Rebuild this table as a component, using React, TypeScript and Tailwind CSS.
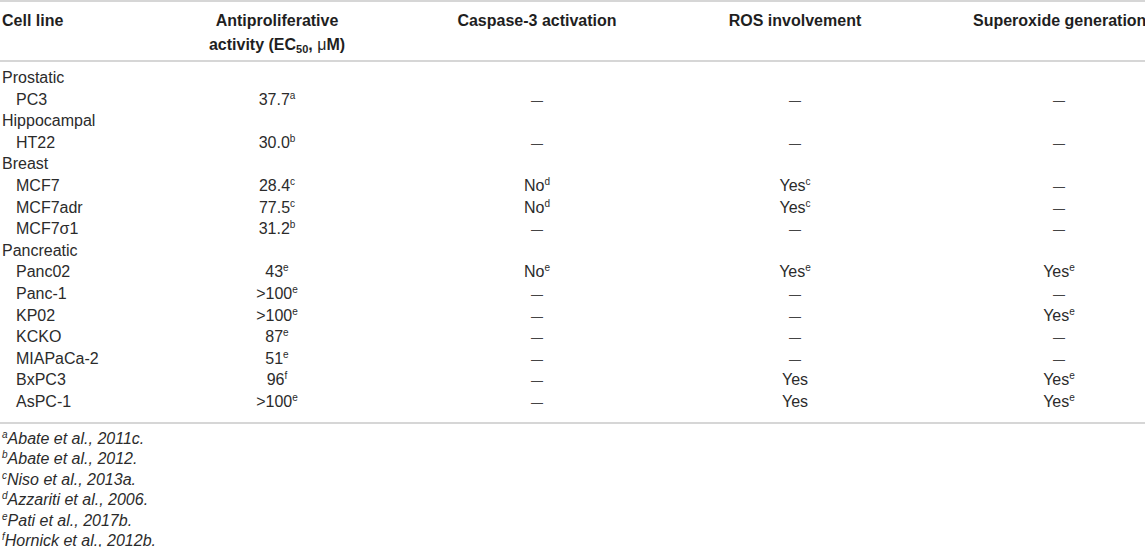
import React from 'react';

type Cell = { v: string; s?: string };

type Row = {
  name: string;
  group?: boolean;
  cells?: Cell[];
};

const dash: Cell = { v: '—' };

const rows: Row[] = [
  { name: 'Prostatic', group: true },
  { name: 'PC3', cells: [{ v: '37.7', s: 'a' }, dash, dash, dash] },
  { name: 'Hippocampal', group: true },
  { name: 'HT22', cells: [{ v: '30.0', s: 'b' }, dash, dash, dash] },
  { name: 'Breast', group: true },
  { name: 'MCF7', cells: [{ v: '28.4', s: 'c' }, { v: 'No', s: 'd' }, { v: 'Yes', s: 'c' }, dash] },
  { name: 'MCF7adr', cells: [{ v: '77.5', s: 'c' }, { v: 'No', s: 'd' }, { v: 'Yes', s: 'c' }, dash] },
  { name: 'MCF7σ1', cells: [{ v: '31.2', s: 'b' }, dash, dash, dash] },
  { name: 'Pancreatic', group: true },
  { name: 'Panc02', cells: [{ v: '43', s: 'e' }, { v: 'No', s: 'e' }, { v: 'Yes', s: 'e' }, { v: 'Yes', s: 'e' }] },
  { name: 'Panc-1', cells: [{ v: '>100', s: 'e' }, dash, dash, dash] },
  { name: 'KP02', cells: [{ v: '>100', s: 'e' }, dash, dash, { v: 'Yes', s: 'e' }] },
  { name: 'KCKO', cells: [{ v: '87', s: 'e' }, dash, dash, dash] },
  { name: 'MIAPaCa-2', cells: [{ v: '51', s: 'e' }, dash, dash, dash] },
  { name: 'BxPC3', cells: [{ v: '96', s: 'f' }, dash, { v: 'Yes' }, { v: 'Yes', s: 'e' }] },
  { name: 'AsPC-1', cells: [{ v: '>100', s: 'e' }, dash, { v: 'Yes' }, { v: 'Yes', s: 'e' }] },
];

const notes = [
  ['a', 'Abate et al., 2011c.'],
  ['b', 'Abate et al., 2012.'],
  ['c', 'Niso et al., 2013a.'],
  ['d', 'Azzariti et al., 2006.'],
  ['e', 'Pati et al., 2017b.'],
  ['f', 'Hornick et al., 2012b.'],
];

const grid = 'grid grid-cols-[97px_360px_160px_356px_172px]';

const App = () => {
  return (
    <div className="w-[1145px] h-[547px] overflow-hidden bg-white font-['Liberation_Sans',Arial,sans-serif] text-[16px] text-[#2b2b2b]">
      {/* header */}
      <div className={`${grid} border-t-2 border-b-2 border-[#d6d6d6] pt-[7px] pb-[3px] leading-[24px] font-bold text-[#1f1f1f]`}>
        <div className="pl-[2px] whitespace-nowrap">Cell line</div>
        <div className="text-center">
          Antiproliferative
          <br />
          activity (EC<sub className="text-[11px] -bottom-[3px]">50</sub>, <span className="font-normal">μ</span>M)
        </div>
        <div className="text-center whitespace-nowrap">Caspase-3 activation</div>
        <div className="text-center whitespace-nowrap">ROS involvement</div>
        <div className="text-center whitespace-nowrap">Superoxide generation</div>
      </div>

      {/* body */}
      <div className="border-b-2 border-[#d6d6d6] pt-[5px] pb-[9px]">
        {rows.map((r) => (
          <div key={r.name} className={`${grid} h-[21.6px] leading-[21.6px]`}>
            <div className={`whitespace-nowrap ${r.group ? 'pl-[2px]' : 'pl-[16px]'}`}>{r.name}</div>
            {(r.cells ?? [{ v: '' }, { v: '' }, { v: '' }, { v: '' }]).map((c, i) => (
              <div key={i} className="text-center whitespace-nowrap">
                {c.v === '—' ? (
                  <span className="text-[12px] leading-none text-[#444]">—</span>
                ) : (
                  c.v
                )}
                {c.s && <sup className="text-[10px] leading-none -top-[6px]">{c.s}</sup>}
              </div>
            ))}
          </div>
        ))}
      </div>

      {/* footnotes */}
      <div className="pt-[5px] pl-[2px] italic leading-[20.6px]">
        {notes.map(([k, t]) => (
          <div key={k} className="whitespace-nowrap h-[20.6px]">
            <sup className="text-[10px] leading-none -top-[6px]">{k}</sup>
            {t}
          </div>
        ))}
      </div>
    </div>
  );
};

export default App;
